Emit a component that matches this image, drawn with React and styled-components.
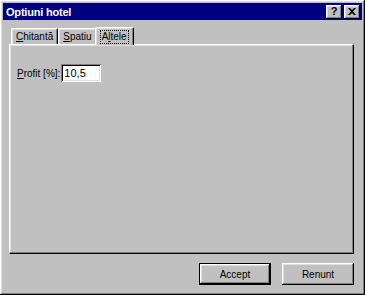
import styled, { createGlobalStyle } from 'styled-components';

const GlobalStyle = createGlobalStyle`
  html, body {
    margin: 0;
    padding: 0;
    background: #c0c0c0;
  }
  body {
    font-family: 'Liberation Sans', Arial, sans-serif;
    font-size: 10px;
    color: #000;
  }
`;

const raised = `
  box-shadow: inset -1px -1px #000, inset 1px 1px #fff, inset -2px -2px #808080, inset 2px 2px #dfdfdf;
`;

const Window = styled.div`
  box-sizing: border-box;
  width: 365px;
  height: 295px;
  background: #c0c0c0;
  padding: 3px;
  display: flex;
  flex-direction: column;
  ${raised}
`;

const TitleBar = styled.div`
  height: 17px;
  background: #000080;
  color: #fff;
  display: flex;
  align-items: center;
  justify-content: space-between;
  padding: 0 2px 0 3px;
  font-weight: 700;
  font-size: 11px;
  letter-spacing: -0.2px;
`;

const TitleButtons = styled.div`
  display: flex;
  gap: 2px;
`;

const CaptionButton = styled.button`
  width: 16px;
  height: 14px;
  padding: 0;
  border: none;
  background: #c0c0c0;
  display: flex;
  align-items: center;
  justify-content: center;
  font-family: 'Liberation Sans', Arial, sans-serif;
  font-weight: 700;
  font-size: 11px;
  line-height: 1;
  color: #000;
  ${raised}
`;

const Content = styled.div`
  flex: 1;
  display: flex;
  flex-direction: column;
  padding: 7px 8px 7px 6px;
`;

const TabRow = styled.div`
  display: flex;
  align-items: flex-end;
  height: 17px;
  padding-left: 2px;
  position: relative;
  z-index: 1;
`;

const Tab = styled.div`
  box-sizing: border-box;
  height: ${(p) => (p.$active ? '18px' : '16px')};
  margin: ${(p) => (p.$active ? '0 -2px -1px -2px' : '0')};
  padding: 0 ${(p) => (p.$active ? '5px' : '3px')};
  display: flex;
  align-items: center;
  background: #c0c0c0;
  border-top: 1px solid #fff;
  border-left: 1px solid #fff;
  border-right: 1px solid #000;
  border-radius: 2px 2px 0 0;
  box-shadow: inset -1px 0 #808080, inset 1px 1px #dfdfdf;
  position: relative;
  z-index: ${(p) => (p.$active ? 2 : 0)};
`;

const TabLabel = styled.span`
  padding: 0 1px;
  outline: ${(p) => (p.$focus ? '1px dotted #000' : 'none')};
  line-height: 12px;
`;

const Panel = styled.div`
  flex: 1;
  box-sizing: border-box;
  background: #c0c0c0;
  border-top: 1px solid #fff;
  border-left: 1px solid #fff;
  border-right: 1px solid #000;
  border-bottom: 1px solid #000;
  box-shadow: inset -1px -1px #808080, inset 1px 1px #dfdfdf;
  padding: 19px 7px;
`;

const Field = styled.div`
  display: flex;
  align-items: center;
  gap: 1px;
`;

const Label = styled.label`
  white-space: nowrap;
`;

const Input = styled.div`
  box-sizing: border-box;
  width: 40px;
  height: 18px;
  background: #fff;
  padding: 2px 3px;
  box-shadow: inset 1px 1px #808080, inset -1px -1px #fff, inset 2px 2px #000, inset -2px -2px #dfdfdf;
  font-size: 11px;
  line-height: 14px;
`;

const Footer = styled.div`
  display: flex;
  justify-content: flex-end;
  gap: 11px;
  padding-top: 9px;
`;

const Button = styled.button`
  box-sizing: border-box;
  width: 72px;
  height: 22px;
  padding: 0;
  border: ${(p) => (p.$default ? '1px solid #000' : 'none')};
  background: #c0c0c0;
  font-family: 'Liberation Sans', Arial, sans-serif;
  font-size: 10px;
  color: #000;
  ${raised}
`;

const U = styled.span`
  text-decoration: underline;
`;

export default function App() {
  return (
    <>
      <GlobalStyle />
      <Window>
        <TitleBar>
          <span>Optiuni hotel</span>
          <TitleButtons>
            <CaptionButton>?</CaptionButton>
            <CaptionButton>
              <svg width="8" height="7" viewBox="0 0 8 7">
                <path d="M0 0h2l2 2 2-2h2L5 3.5 8 7H6L4 5 2 7H0l3-3.5z" fill="#000" />
              </svg>
            </CaptionButton>
          </TitleButtons>
        </TitleBar>
        <Content>
          <TabRow>
            <Tab>
              <TabLabel><U>C</U>hitantă</TabLabel>
            </Tab>
            <Tab>
              <TabLabel><U>S</U>patiu</TabLabel>
            </Tab>
            <Tab $active>
              <TabLabel $focus>A<U>l</U>tele</TabLabel>
            </Tab>
          </TabRow>
          <Panel>
            <Field>
              <Label><U>P</U>rofit [%]:</Label>
              <Input>10,5</Input>
            </Field>
          </Panel>
          <Footer>
            <Button $default>Accept</Button>
            <Button>Renunt</Button>
          </Footer>
        </Content>
      </Window>
    </>
  );
}
